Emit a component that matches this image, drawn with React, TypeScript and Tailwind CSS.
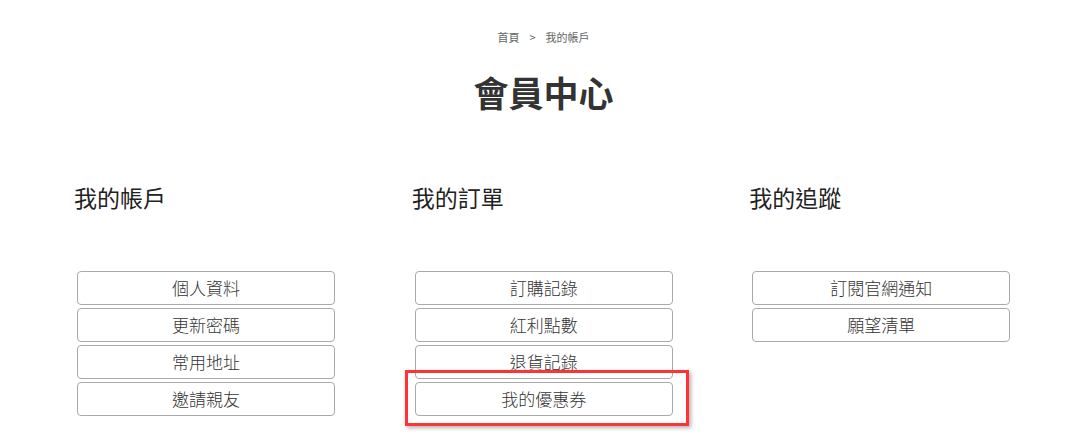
import React from 'react'

const columns = [
  { title: '我的帳戶', items: ['個人資料', '更新密碼', '常用地址', '邀請親友'] },
  { title: '我的訂單', items: ['訂購記錄', '紅利點數', '退貨記錄', '我的優惠券'] },
  { title: '我的追蹤', items: ['訂閱官網通知', '願望清單'] },
]

export default function App() {
  return (
    <div
      className="relative h-[445px] w-full overflow-hidden bg-white text-[#333]"
      style={{ fontFamily: '"Noto Sans CJK TC", "Noto Sans", sans-serif' }}
    >
      {/* Breadcrumb */}
      <div className="flex justify-center gap-[10px] pt-[29px] text-[11px] leading-[16px] text-[#666]">
        <span>首頁</span>
        <span>&gt;</span>
        <span>我的帳戶</span>
      </div>

      <h1 className="mt-[24px] text-center text-[35px] font-bold leading-[46px] text-[#333]">會員中心</h1>

      {/* Columns */}
      <div className="mt-[66px] grid grid-cols-3 pl-[74px]">
        {columns.map((col) => (
          <div key={col.title}>
            <h2 className="text-[23px] font-normal leading-[32px] text-[#222]">{col.title}</h2>
            <div className="mt-[58px] flex flex-col gap-[3px] pl-[3px]">
              {col.items.map((item) => (
                <button
                  key={item}
                  className="h-[34px] w-[258px] rounded-[4px] border border-[#aaa] bg-white text-[17px] font-light leading-[32px] text-[#333]"
                >
                  {item}
                </button>
              ))}
            </div>
          </div>
        ))}
      </div>

      {/* Highlight annotation */}
      <div className="pointer-events-none absolute left-[405px] top-[370px] h-[56px] w-[284px] border-[3px] border-[#f33] shadow-[2px_2px_4px_rgba(0,0,0,0.3)]" />
    </div>
  )
}
